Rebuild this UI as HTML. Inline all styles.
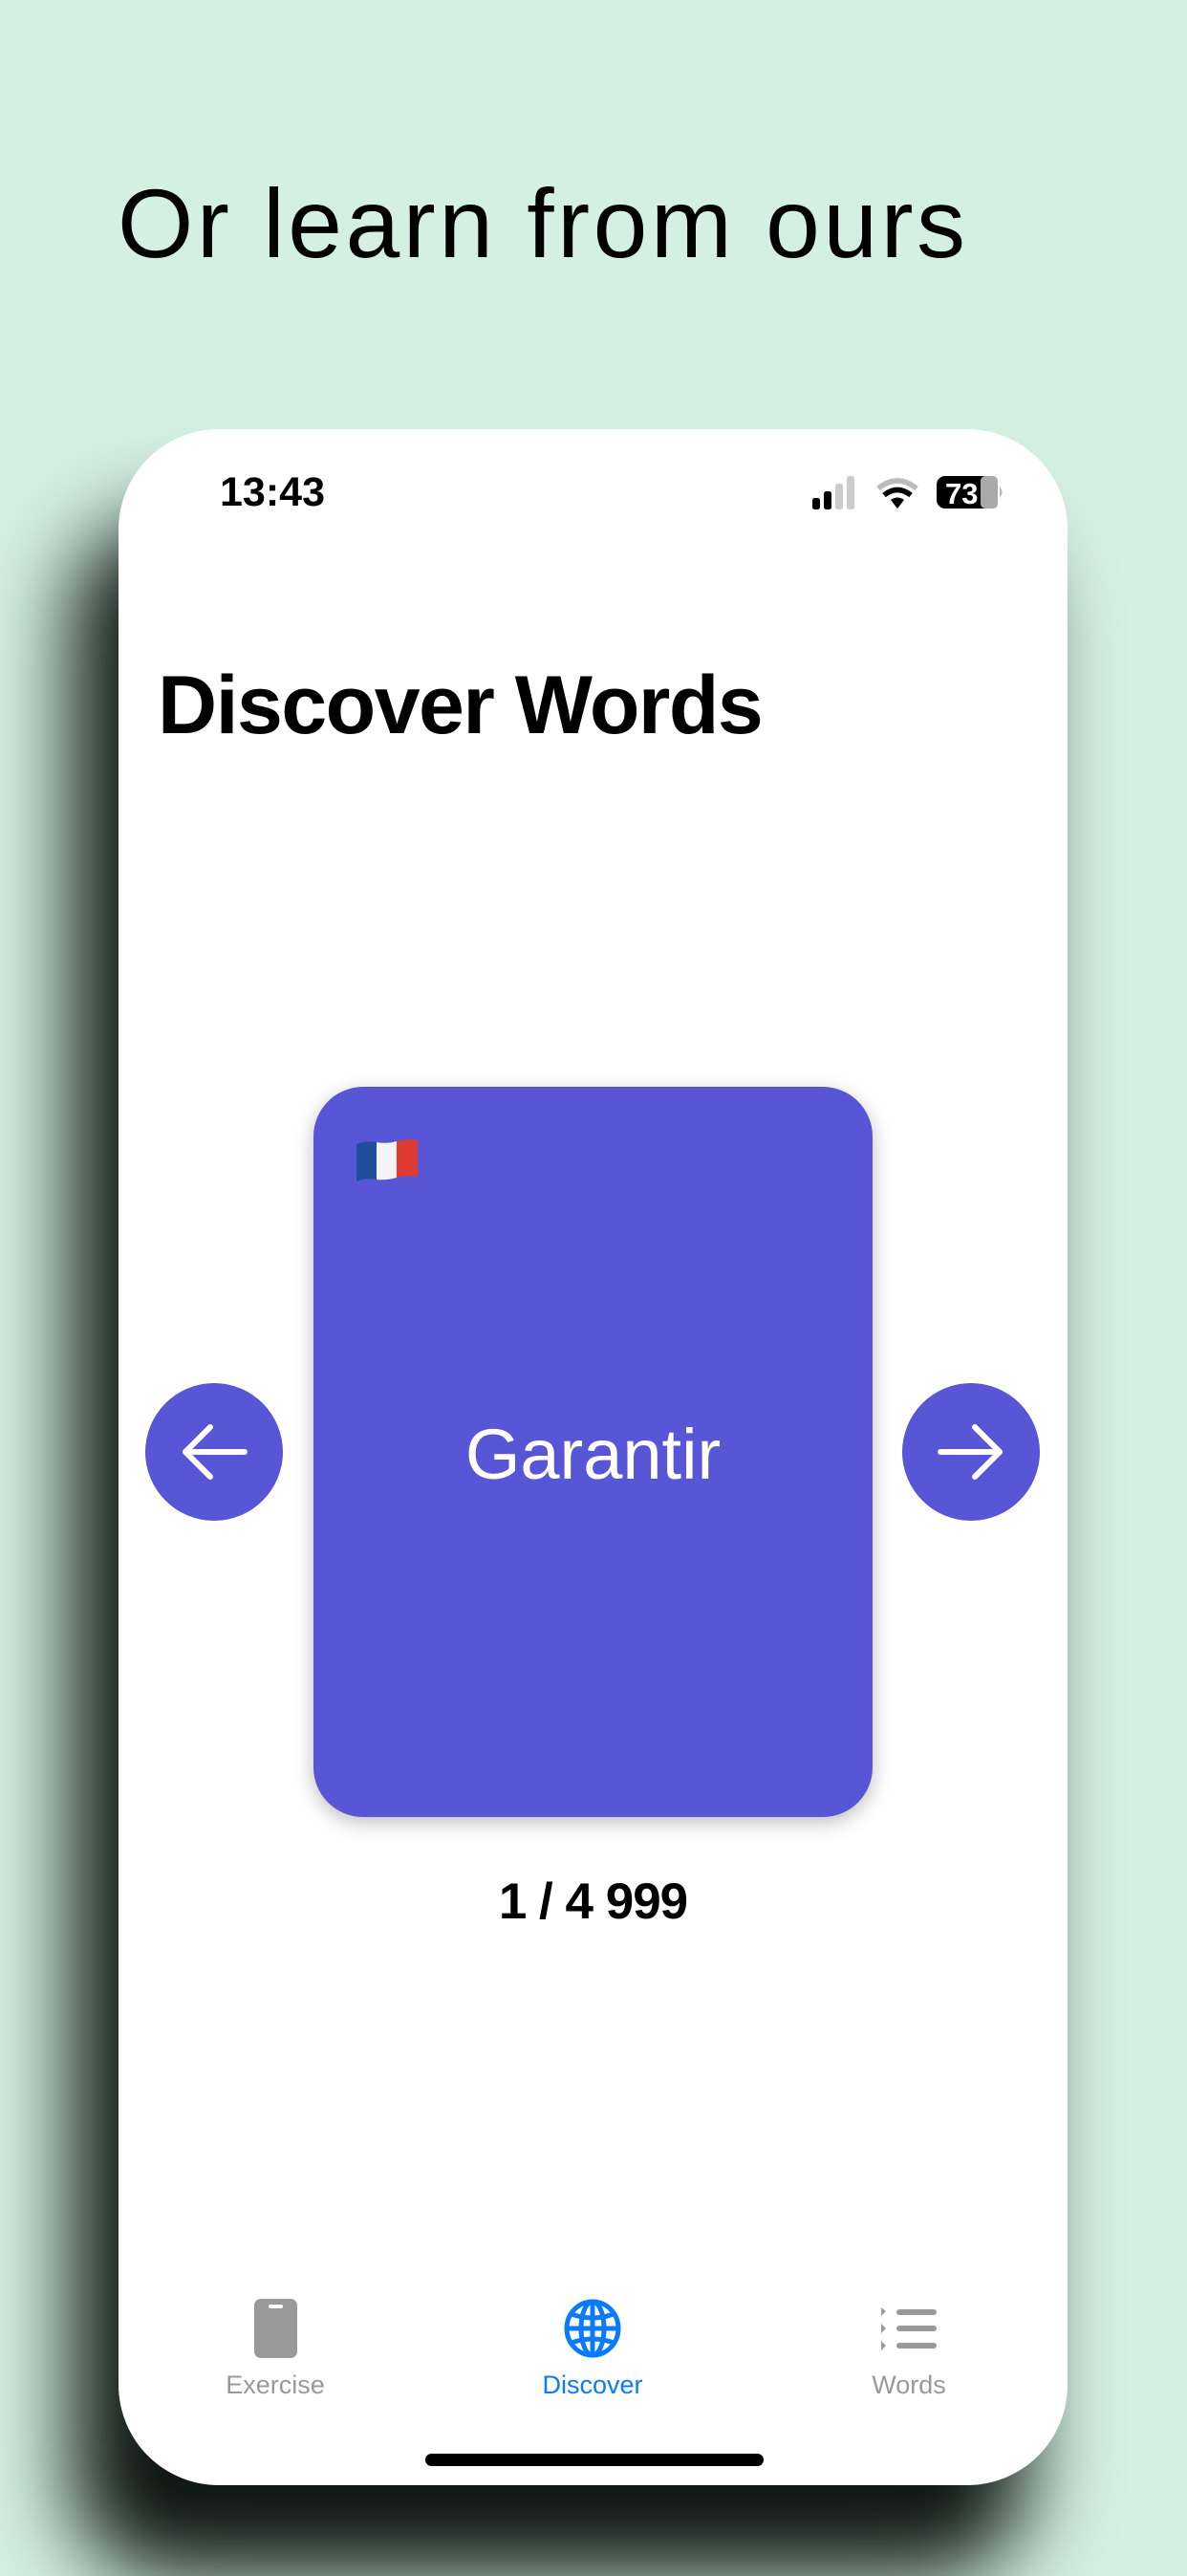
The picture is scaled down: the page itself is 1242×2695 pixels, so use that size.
<!DOCTYPE html>
<html><head><meta charset="utf-8"><style>
*{margin:0;padding:0;box-sizing:border-box}
body{width:1242px;height:2688px;background:#d4f0e3;position:relative;overflow:hidden;font-family:"Liberation Sans",sans-serif}
.t{position:absolute;left:123px;top:176px;font-size:102px;color:#000;letter-spacing:3.5px;font-weight:500}
.shadow{position:absolute;left:75px;top:545px;width:1000px;height:2150px;background:#0e1512;border-radius:100px;filter:blur(45px)}
.phone{position:absolute;left:124px;top:449px;width:993px;height:2151px;background:#fff;border-radius:105px;overflow:hidden}
.abs{position:absolute}
</style></head><body>
<div class="t">Or learn from ours</div>
<div class="shadow"></div>
<div class="phone">
 <div class="abs" style="left:106px;top:42px;font-size:43px;font-weight:bold">13:43</div>
 <svg class="abs" style="left:722px;top:46px" width="210" height="42" viewBox="0 0 210 42">
  <rect x="4" y="26" width="8" height="12" rx="2.5" fill="#000"/>
  <rect x="16" y="19" width="8" height="19" rx="2.5" fill="#000"/>
  <rect x="28" y="11" width="8" height="27" rx="2.5" fill="#ccc"/>
  <rect x="40" y="3" width="8" height="35" rx="2.5" fill="#ccc"/>
  <path d="M73 16 Q93 0 113 16" stroke="#bbb" stroke-width="5.5" fill="none"/>
  <path d="M79 23 Q93 12 107 23" stroke="#000" stroke-width="5.5" fill="none"/>
  <path d="M86 28 L93 37 L100 28 Q93 23 86 28Z" fill="#000"/>
  <rect x="134" y="3" width="62" height="34" rx="9" fill="#000"/>
  <rect x="180" y="3" width="18" height="34" rx="5" fill="#aaa"/>
  <path d="M200 14 Q205 20 200 26Z" fill="#bbb"/>
  <text x="143" y="32" font-size="31" font-weight="bold" fill="#fff" font-family="Liberation Sans">73</text>
 </svg>
 <div class="abs" style="left:41px;top:240px;font-size:86px;font-weight:bold;letter-spacing:-1.5px">Discover Words</div>
 <div class="abs" style="left:204px;top:688px;width:585px;height:764px;background:#5856d6;border-radius:52px;box-shadow:0 6px 20px rgba(0,0,0,.25)"></div>
 <svg class="abs" style="left:249px;top:742px" width="64" height="46" viewBox="0 0 64 46">
  <path d="M0 6 Q10 2 21 4 L21 43 Q10 41 0 45Z" fill="#1f4f9a"/>
  <path d="M21 4 Q32 6 42 3 L42 41 Q32 44 21 43Z" fill="#f4f4f4"/>
  <path d="M42 3 Q53 0 64 2 L64 40 Q53 38 42 41Z" fill="#e03a30"/>
 </svg>
 <div class="abs" style="left:204px;width:585px;top:1030px;text-align:center;color:#fff;font-size:74px">Garantir</div>
 <div class="abs" style="left:28px;top:998px;width:144px;height:144px;border-radius:50%;background:#5856d6"></div>
 <svg class="abs" style="left:28px;top:998px" width="144" height="144" viewBox="0 0 144 144"><path d="M104 72H42M68 46L42 72L68 98" stroke="#fff" stroke-width="6" fill="none" stroke-linecap="round" stroke-linejoin="round"/></svg>
 <div class="abs" style="left:820px;top:998px;width:144px;height:144px;border-radius:50%;background:#5856d6"></div>
 <svg class="abs" style="left:820px;top:998px" width="144" height="144" viewBox="0 0 144 144"><path d="M40 72H102M76 46L102 72L76 98" stroke="#fff" stroke-width="6" fill="none" stroke-linecap="round" stroke-linejoin="round"/></svg>
 <div class="abs" style="left:0;width:993px;top:1510px;text-align:center;font-size:53px;font-weight:bold;letter-spacing:-1px">1 / 4 999</div>
 <svg class="abs" style="left:142px;top:1956px" width="45" height="62" viewBox="0 0 45 62"><rect x="0" y="0" width="45" height="62" rx="7" fill="#999"/><rect x="15" y="6" width="15" height="4" rx="2" fill="#fff"/></svg>
 <svg class="abs" style="left:466px;top:1956px" width="60" height="62" viewBox="0 0 60 62" fill="none" stroke="#0a7aff" stroke-width="5"><ellipse cx="30" cy="31" rx="27" ry="28"/><ellipse cx="30" cy="31" rx="12" ry="28"/><line x1="30" y1="3" x2="30" y2="59"/><line x1="3" y1="31" x2="57" y2="31"/><path d="M8 16Q30 24 52 16M8 46Q30 38 52 46"/></svg>
 <svg class="abs" style="left:798px;top:1965px" width="60" height="45" viewBox="0 0 60 45" fill="#999"><path d="M0 0L5 4L0 9Z M0 17L5 22L0 27Z M0 35L5 40L0 45Z"/><rect x="16" y="2" width="42" height="6" rx="3"/><rect x="16" y="19" width="42" height="6" rx="3"/><rect x="16" y="37" width="42" height="6" rx="3"/></svg>
 <div class="abs" style="left:64px;width:200px;top:2031px;text-align:center;font-size:27px;color:#999">Exercise</div>
 <div class="abs" style="left:396px;width:200px;top:2031px;text-align:center;font-size:27px;color:#0a7aff">Discover</div>
 <div class="abs" style="left:727px;width:200px;top:2031px;text-align:center;font-size:27px;color:#999">Words</div>
 <div class="abs" style="left:321px;top:2118px;width:354px;height:13px;border-radius:7px;background:#000"></div>
</div>
</body></html>
